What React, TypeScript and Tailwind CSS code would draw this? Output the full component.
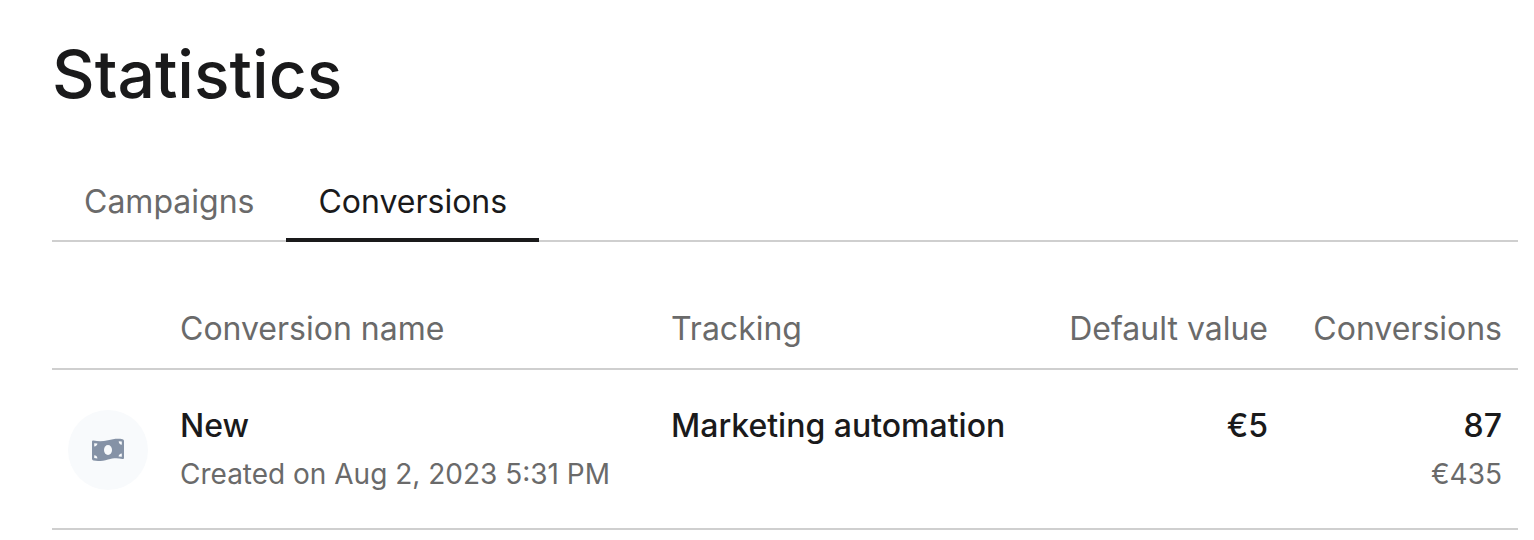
const tabs = ["Campaigns", "Conversions"];

const rows = [
  {
    name: "New",
    created: "Created on Aug 2, 2023 5:31 PM",
    tracking: "Marketing automation",
    value: "€5",
    count: "87",
    total: "€435",
  },
];

function MoneyIcon() {
  return (
    <svg viewBox="0 0 34 24" className="h-6 w-[34px]" aria-hidden="true">
      <path
        fill="#8592a6"
        d="M1 3.4C1 2.600 1.600 2.300 2.400 2.500C8 3.700 12 3.400 17 2.200C22 .9 27 .2 31.500 1.200C32.600 1.500 33 2.100 33 3V19.700C33 20.700 32.400 21.100 31.400 20.900C26 19.800 22 20.200 17 21.400C12 22.800 7 23.500 2.500 22.500C1.500 22.300 1 21.700 1 20.800Z"
      />
      <ellipse cx="17" cy="12" rx="4" ry="4.900" fill="#f8fafc" />
      <path
        fill="#f8fafc"
        d="M3.200 5.300L6.400 5.500C6.300 7.200 5.100 8.400 3.200 8.500ZM3.200 17.300C5 17.300 6.300 18.500 6.400 20.400L3.200 20ZM30.800 3.400V6.700C29 6.600 27.800 5.300 27.700 3.200ZM30.800 15.400V18.700L27.600 18.500C27.700 16.600 29 15.500 30.800 15.400Z"
      />
    </svg>
  );
}

export default function App() {
  return (
    <main className="min-h-screen bg-white pt-9 pr-4 pl-[52px] font-[Inter,sans-serif] text-[32px] leading-10 text-[#1a1a1b]">
      <h1 className="text-[66px] leading-[76px] font-medium">Statistics</h1>

      <nav className="mt-[50px] flex border-b-2 border-[#cfcfcf]">
        {tabs.map((tab) => (
          <button
            key={tab}
            className={
              tab === "Conversions"
                ? "-mb-[2px] h-20 border-b-4 border-[#1a1a1b] px-8 pt-1"
                : "h-[78px] px-8 pt-[2px] text-[#6a6a6a]"
            }
          >
            {tab}
          </button>
        ))}
      </nav>

      <table className="mt-12 w-full table-fixed border-separate border-spacing-0">
        <colgroup>
          <col className="w-28" />
          <col />
          <col className="w-[361px]" />
          <col className="w-[268px]" />
          <col className="w-[234px]" />
        </colgroup>
        <thead>
          <tr className="h-20 text-[#6a6a6a] *:border-b-2 *:border-[#cfcfcf]">
            <th aria-label="Type" />
            <th className="px-4 text-left font-normal">Conversion name</th>
            <th className="px-4 text-left font-normal">Tracking</th>
            <th className="px-4 text-right font-normal">Default value</th>
            <th className="px-4 text-right font-normal">Conversions</th>
          </tr>
        </thead>
        <tbody>
          {rows.map((row) => (
            <tr key={row.name} className="h-40 align-top *:border-b-2 *:border-[#cfcfcf]">
              <td className="pt-10 pl-4">
                <div className="flex size-20 items-center justify-center rounded-full bg-[#f8fafc]">
                  <MoneyIcon />
                </div>
              </td>
              <td className="px-4 pt-9">
                <div className="font-medium">{row.name}</div>
                <div className="mt-2 text-[28px] text-[#6a6a6a]">{row.created}</div>
              </td>
              <td className="pt-9 pl-4 font-medium whitespace-nowrap">{row.tracking}</td>
              <td className="px-4 pt-9 text-right font-medium">{row.value}</td>
              <td className="px-4 pt-9 text-right">
                <div className="font-medium">{row.count}</div>
                <div className="mt-2 text-[28px] text-[#6a6a6a]">{row.total}</div>
              </td>
            </tr>
          ))}
        </tbody>
      </table>
    </main>
  );
}
